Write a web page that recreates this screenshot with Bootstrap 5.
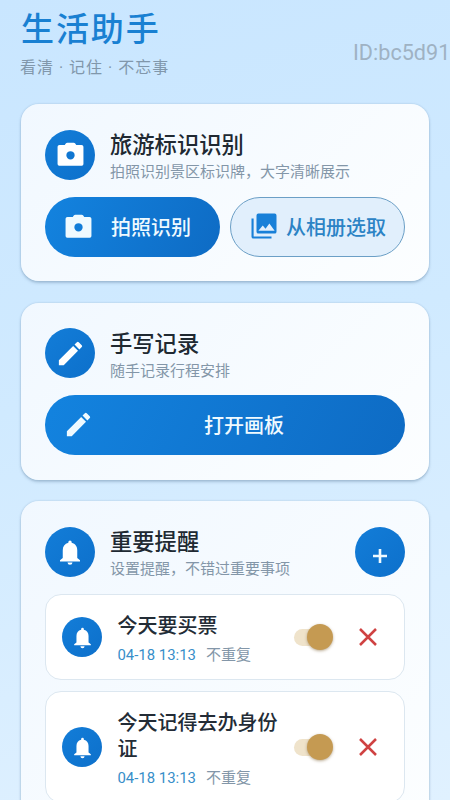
<!DOCTYPE html>
<html lang="zh-CN">
<head>
<meta charset="utf-8">
<meta name="viewport" content="width=device-width, initial-scale=1">
<title>生活助手</title>
<link href="https://cdn.jsdelivr.net/npm/bootstrap@5.3.0/dist/css/bootstrap.min.css" rel="stylesheet">
<style>
html, body { height: 800px; overflow: hidden; }
body { font-family: Roboto, "Noto Sans CJK SC", sans-serif; color: #1f2833; background: linear-gradient(165deg, #c9e6ff 0%, #d0eaff 45%, #e0f1ff 100%); }
.screen { padding: 6px 21px 0 21px; height: 800px; }
.app-title { font-size: 33px; line-height: 48px; letter-spacing: 1.9px; font-weight: 500; color: #1980d2; }
.tagline { font-size: 16px; line-height: 24px; letter-spacing: 1px; color: #8197ab; margin: 2px 0 0 -1px; }
.watermark { position: absolute; left: 353px; top: 39px; font-size: 21.6px; line-height: 28px; color: #9fb2c3; white-space: nowrap; }
.panel { border-radius: 18px; background: linear-gradient(135deg, #f1f8ff, #fcfeff); box-shadow: 0 2px 3px rgba(80,115,145,.35), 0 0 2px rgba(80,115,145,.3); padding: 25.5px 24px 24.5px; margin-bottom: 21.6px; }
.panels { margin-top: 24px; }
.disc { width: 50px; height: 50px; background: linear-gradient(135deg, #137dd8, #0d70cb); color: #fff; }
.disc-sm { width: 40px; height: 40px; }
.head { height: 50px; gap: 15px; }
.head-title { font-size: 22.3px; line-height: 29px; font-weight: 500; color: #202932; margin-top: 5px; }
.head-sub { font-size: 15px; line-height: 22px; color: #8396a8; margin-top: 1px; white-space: nowrap; }
.actions { margin-top: 17px; gap: 10px; }
.pill { height: 60px; font-size: 20px; font-weight: 500; line-height: 1; white-space: nowrap; padding: 2px 18px 0 20px; }
.pill svg { margin-bottom: 3px; }
.pill-main { background: linear-gradient(115deg, #1383df, #0e6bc4); color: #effaff; border: 0; }
.pill-main:hover { color: #fff; }
.pill-soft { background: #e1effc; color: #2b83c5; border: 1.5px solid #6b9fc6; padding-right: 17px; padding-left: 18px; gap: 7px; }
.pill-soft svg { color: #1880d8; }
.pill-wide { padding-left: 18px; padding-right: 11px; }
.items { margin-top: 17px; gap: 11px; }
.item { background: #fff; border: 1.5px solid #dce7f0; border-radius: 16px; padding: 18px 26px 14px 16px; }
.item-title { font-size: 20px; line-height: 26px; font-weight: 500; color: #232c36; }
.item-time { font-size: 15px; line-height: 20px; margin-top: 6px; gap: 10px; color: #8396a8; }
.item-time span:first-child { color: #378ec9; font-size: 14.9px; }
.item-name { margin-left: 15.5px; }
.item > .disc, .item > .track, .item > .close-x { margin-top: -3px; }
.track { width: 36px; height: 17px; border-radius: 9px; background: #efe3cb; margin-left: 13px; }
.knob { width: 26px; height: 26px; background: #c59a52; box-shadow: 0 1px 3px rgba(120,90,40,.5); margin-right: -3px; }
.close-x { margin-left: 28px; }
</style>
<script src="https://cdn.jsdelivr.net/npm/bootstrap@5.3.0/dist/js/bootstrap.bundle.min.js"></script>
</head>
<body>
<svg class="d-none">
  <symbol id="camera" viewBox="0 0 24 24"><path fill="currentColor" fill-rule="evenodd" d="M9.200 1.500Q8.300 1.500 7.800 2.200L6.900 3.500H2.200Q.5 3.500 .5 5.200V20.500Q.5 22 2 22H22Q23.500 22 23.500 20.500V5.200Q23.500 3.500 21.800 3.500H17.100L16.200 2.200Q15.700 1.500 14.800 1.500ZM12 9a3.700 3.700 0 1 1 0 7.400 3.700 3.700 0 0 1 0-7.400Z"/></symbol>
  <symbol id="pencil" viewBox="0 0 24 24"><path fill="currentColor" d="M3 17.250V21h3.750L17.810 9.940l-3.750-3.750zM20.710 7.040a1 1 0 0 0 0-1.410l-2.340-2.340a1 1 0 0 0-1.410 0l-1.830 1.830 3.750 3.750z"/></symbol>
  <symbol id="bell" viewBox="0 0 24 24"><path fill="currentColor" d="M12 22.200a2 2 0 0 0 2-1.900h-4a2 2 0 0 0 2 1.900zm5.800-5.400V10.500c0-2.900-1.500-5.200-4.500-5.900V4a1.300 1.300 0 0 0-2.600 0v.6C7.700 5.300 6.200 7.600 6.200 10.500v6.300L4 18.500V19.500h16v-1z"/></symbol>
  <symbol id="photos" viewBox="0 0 24 24"><path fill="currentColor" d="M22 16.500V3.500A1.500 1.500 0 0 0 20.500 2H7.500A1.500 1.500 0 0 0 6 3.500v13A1.500 1.500 0 0 0 7.500 18h13a1.500 1.500 0 0 0 1.500-1.500zM7.500 15.800l3.500-4.300 2.200 2.600L16.300 10l4.200 5.800zM2 6v14.500A1.500 1.500 0 0 0 3.500 22H18v-1.700H3.700V6z"/></symbol>
  <symbol id="cross" viewBox="0 0 20 20"><path d="M2 2 18 18M18 2 2 18" stroke="#cf4242" stroke-width="2.500" fill="none"/></symbol>
</svg>
<main class="screen position-relative overflow-hidden">
  <h1 class="app-title m-0">生活助手</h1>
  <p class="tagline mb-0">看清 · 记住 · 不忘事</p>
  <div class="watermark">ID:bc5d91</div>

  <div class="panels">
    <section class="panel">
      <div class="head d-flex align-items-center">
        <div class="disc rounded-circle d-flex align-items-center justify-content-center flex-shrink-0"><svg width="27" height="27"><use href="#camera"/></svg></div>
        <div><h2 class="head-title mb-0">旅游标识识别</h2><p class="head-sub mb-0">拍照识别景区标识牌，大字清晰展示</p></div>
      </div>
      <div class="actions d-flex">
        <button class="btn pill pill-main rounded-pill d-flex align-items-center w-50"><svg width="27" height="27"><use href="#camera"/></svg><span class="flex-fill text-center ps-2">拍照识别</span></button>
        <button class="btn pill pill-soft rounded-pill d-flex align-items-center w-50"><svg width="30" height="30"><use href="#photos"/></svg><span>从相册选取</span></button>
      </div>
    </section>

    <section class="panel">
      <div class="head d-flex align-items-center">
        <div class="disc rounded-circle d-flex align-items-center justify-content-center flex-shrink-0"><svg width="31" height="31"><use href="#pencil"/></svg></div>
        <div><h2 class="head-title mb-0">手写记录</h2><p class="head-sub mb-0">随手记录行程安排</p></div>
      </div>
      <div class="actions d-flex">
        <button class="btn pill pill-main pill-wide rounded-pill d-flex align-items-center w-100"><svg width="31" height="31"><use href="#pencil"/></svg><span class="flex-fill text-center">打开画板</span></button>
      </div>
    </section>

    <section class="panel">
      <div class="head d-flex align-items-center">
        <div class="disc rounded-circle d-flex align-items-center justify-content-center flex-shrink-0"><svg width="30" height="30"><use href="#bell"/></svg></div>
        <div class="flex-fill"><h2 class="head-title mb-0">重要提醒</h2><p class="head-sub mb-0">设置提醒，不错过重要事项</p></div>
        <div class="disc rounded-circle d-flex align-items-center justify-content-center flex-shrink-0 pt-2"><svg width="14" height="16" viewBox="0 0 14 16"><path d="M7 1v14M0 8h14" stroke="#effaff" stroke-width="2.600"/></svg></div>
      </div>
      <div class="items d-flex flex-column">
        <div class="item d-flex align-items-center">
          <div class="disc disc-sm rounded-circle d-flex align-items-center justify-content-center flex-shrink-0"><svg width="25" height="25"><use href="#bell"/></svg></div>
          <div class="flex-fill item-name"><div class="item-title">今天要买票</div><div class="item-time d-flex"><span>04-18 13:13</span><span>不重复</span></div></div>
          <div class="track d-flex align-items-center justify-content-end flex-shrink-0"><div class="knob rounded-circle"></div></div>
          <svg class="close-x flex-shrink-0" width="20" height="20"><use href="#cross"/></svg>
        </div>
        <div class="item d-flex align-items-center">
          <div class="disc disc-sm rounded-circle d-flex align-items-center justify-content-center flex-shrink-0"><svg width="25" height="25"><use href="#bell"/></svg></div>
          <div class="flex-fill item-name"><div class="item-title">今天记得去办身份证</div><div class="item-time d-flex"><span>04-18 13:13</span><span>不重复</span></div></div>
          <div class="track d-flex align-items-center justify-content-end flex-shrink-0"><div class="knob rounded-circle"></div></div>
          <svg class="close-x flex-shrink-0" width="20" height="20"><use href="#cross"/></svg>
        </div>
      </div>
    </section>
  </div>
</main>
</body>
</html>
